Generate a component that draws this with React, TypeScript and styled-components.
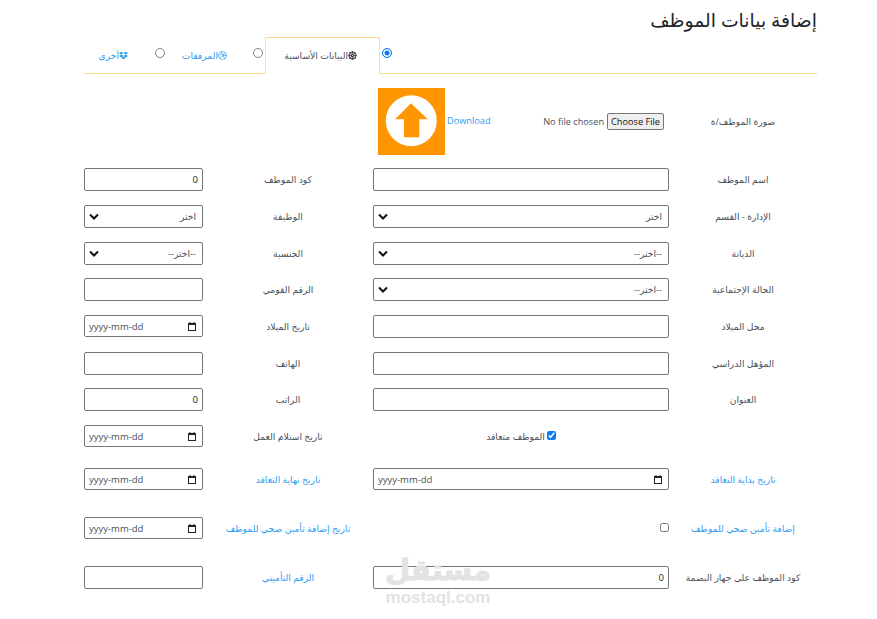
import styled, { createGlobalStyle } from 'styled-components';
import { FaDharmachakra, FaDribbble, FaDropbox } from 'react-icons/fa';

const fontStack = '"Open Sans", "DejaVu Sans", sans-serif';
const chevron =
  "data:image/svg+xml,%3Csvg xmlns='http://www.w3.org/2000/svg' width='10' height='7' viewBox='0 0 10 7'%3E%3Cpath d='M1 1.5l4 4 4-4' fill='none' stroke='%23111' stroke-width='2'/%3E%3C/svg%3E";

const GlobalStyle = createGlobalStyle`
  html, body {
    margin: 0;
    padding: 0;
    background: #fff;
  }
  body {
    font-family: ${fontStack};
    font-size: 9.2px;
    color: #212529;
  }
`;

const Page = styled.div`
  position: relative;
  width: 877px;
  height: 619px;
  overflow: hidden;
  box-sizing: border-box;
  padding: 8px 60px 0 84px;
  direction: rtl;
`;

const Title = styled.h2`
  margin: 0 0 5px;
  font-size: 18.8px;
  line-height: 24px;
  font-weight: 400;
  color: #212529;
`;

const Tabs = styled.div`
  box-sizing: border-box;
  display: flex;
  align-items: stretch;
  height: 37px;
  padding-right: 425px;
  border-bottom: 1px solid #ffd98a;
`;

const Radio = styled.input.attrs({ type: 'radio', name: 'tabs' })`
  box-sizing: border-box;
  appearance: none;
  flex: none;
  width: 10px;
  height: 10px;
  margin: 11px 0 0;
  border: 1px solid #858585;
  border-radius: 50%;
  background: #fff;

  &:checked {
    border-color: #0d7bf5;
    background: #0d7bf5;
    box-shadow: inset 0 0 0 1.5px #fff;
  }
`;

const Tab = styled.label<{ $active?: boolean; $width: number; $pad: number }>`
  box-sizing: border-box;
  flex: none;
  width: ${({ $width }) => $width}px;
  height: ${({ $active }) => ($active ? '37px' : '36px')};
  margin-right: ${({ $active }) => ($active ? '2px' : '0')};
  margin-left: ${({ $active }) => ($active ? '2px' : '0')};
  padding-right: ${({ $pad }) => $pad}px;
  padding-bottom: 1px;
  display: flex;
  align-items: center;
  font-size: 9.2px;
  color: ${({ $active }) => ($active ? '#495057' : '#2f9bf0')};
  background: #fff;
  border: 1px solid ${({ $active }) => ($active ? '#dee2e6' : 'transparent')};
  border-top-color: ${({ $active }) => ($active ? '#ffd98a' : 'transparent')};
  border-bottom: 0;
  svg {
    flex: none;
    width: 9px;
    height: 9px;
  }
`;

const Form = styled.div`
  display: flex;
  flex-direction: column;
  margin-top: 14px;
`;

const Row = styled.div<{ $top?: number; $height?: number }>`
  display: grid;
  grid-template-columns: 148px 296px 170px 119px;
  align-items: center;
  height: ${({ $height }) => $height ?? 23}px;
  margin-top: ${({ $top }) => $top ?? 0}px;
`;

const Label = styled.div<{ $link?: boolean }>`
  text-align: center;
  font-size: 9.2px;
  color: ${({ $link }) => ($link ? '#2f9bf0' : '#495057')};
`;

const Field = styled.input`
  box-sizing: border-box;
  width: 100%;
  height: 23px;
  padding: 1px 4px;
  border: 1px solid #767676;
  border-radius: 2px;
  background: transparent;
  font-family: ${fontStack};
  font-size: 9.5px;
  color: #212529;
  text-align: right;
`;

const Select = styled.select`
  box-sizing: border-box;
  appearance: none;
  width: 100%;
  height: 23px;
  padding: 0 6px 0 18px;
  border: 1px solid #767676;
  border-radius: 2px;
  background: #fff url("${chevron}") no-repeat 4px 50%;
  font-family: ${fontStack};
  font-size: 9.2px;
  color: #495057;
`;

const DateBox = styled.div`
  box-sizing: border-box;
  align-self: start;
  direction: ltr;
  display: flex;
  align-items: center;
  justify-content: space-between;
  width: 100%;
  height: 22px;
  padding: 0 6px 0 4px;
  border: 1px solid #767676;
  border-radius: 2px;
  font-size: 9.5px;
  color: #495057;
`;

const PhotoCell = styled.div`
  grid-column: 2 / span 3;
  display: flex;
  direction: ltr;
  align-items: center;
  justify-content: flex-end;
`;

const PhotoGroup = styled.div`
  display: flex;
  align-items: center;
  width: 291px;
`;

const Thumb = styled.svg`
  flex: none;
  display: block;
  width: 67px;
  height: 67px;
`;

const Download = styled.a`
  margin: -3px 0 0 2px;
  font-size: 9.2px;
  color: #2f9bf0;
  text-decoration: none;
`;

const FileField = styled.input.attrs({ type: 'file', dir: 'rtl' })`
  flex: none;
  margin: 0 5px 0 auto;
  width: 125px;
  font-family: ${fontStack};
  font-size: 9.2px;
  color: #495057;

  &::file-selector-button {
    height: 17px;
    margin: 0 0 0 3px;
    padding: 0 3px;
    border: 1px solid #767676;
    border-radius: 2px;
    background: #efefef;
    font-family: ${fontStack};
    font-size: 9.2px;
    color: #111;
  }
`;

const CheckWrap = styled.div<{ $start?: boolean }>`
  display: flex;
  align-items: center;
  justify-content: ${({ $start }) => ($start ? 'flex-start' : 'center')};
  gap: 2px;
  font-size: 9.2px;
  color: #495057;
  input {
    width: 9px;
    height: 9px;
    margin: 0 0 3px;
    accent-color: #0d7bf5;
  }
`;

const Watermark = styled.div`
  position: absolute;
  left: 384px;
  top: 550px;
  width: 108px;
  direction: ltr;
  text-align: center;
  color: #e3e3e3;
  font-family: "DejaVu Sans", sans-serif;
  font-weight: 700;
  pointer-events: none;
`;

const WatermarkWord = styled.div`
  font-size: 29px;
  line-height: 40px;
  -webkit-text-stroke: 1px #e3e3e3;
`;

const WatermarkSite = styled.div`
  font-family: "Liberation Sans", sans-serif;
  font-size: 17px;
  line-height: 15px;
`;

const UploadThumb = () => (
  <Thumb viewBox="0 0 67 67">
    <rect width="67" height="67" fill="#ff9500" />
    <circle cx="33.300" cy="32.800" r="25.500" fill="#fff" />
    <path d="M33 15.300 L49.700 31.300 H41.300 V49.300 H26 V31.300 H17 Z" fill="#ff9500" />
  </Thumb>
);

const CalendarIcon = () => (
  <svg width="8" height="9" viewBox="0 0 8 9">
    <path d="M0 1h8v8H0z M1 3v5h6V3z" fill="#222" fillRule="evenodd" />
    <path d="M1.5 0h1v1.5h-1zM5.500 0h1v1.500h-1z" fill="#222" />
  </svg>
);

const DateInput = () => (
  <DateBox>
    <span>yyyy-mm-dd</span>
    <CalendarIcon />
  </DateBox>
);

export default function App() {
  return (
    <Page>
      <GlobalStyle />
      <Title>إضافة بيانات الموظف</Title>
      <Tabs>
        <Radio defaultChecked />
        <Tab $active $width={115} $pad={22}>
          <FaDharmachakra />
          البيانات الأساسية
        </Tab>
        <Radio />
        <Tab $width={88} $pad={25}>
          <FaDribbble />
          المرفقات
        </Tab>
        <Radio />
        <Tab $width={71} $pad={26}>
          <FaDropbox />
          أخرى
        </Tab>
      </Tabs>
      <Form>
        <Row $height={67}>
          <Label>صورة الموظف/ة</Label>
          <PhotoCell>
            <PhotoGroup>
              <UploadThumb />
              <Download href="#">Download</Download>
              <FileField />
            </PhotoGroup>
          </PhotoCell>
        </Row>
        <Row $top={13}>
          <Label>اسم الموظف</Label>
          <Field />
          <Label>كود الموظف</Label>
          <Field defaultValue="0" />
        </Row>
        <Row $top={14}>
          <Label>الإدارة - القسم</Label>
          <Select><option>اختر</option></Select>
          <Label>الوظيفة</Label>
          <Select><option>اختر</option></Select>
        </Row>
        <Row $top={14}>
          <Label>الديانة</Label>
          <Select><option>--اختر--</option></Select>
          <Label>الجنسية</Label>
          <Select><option>--اختر--</option></Select>
        </Row>
        <Row $top={13}>
          <Label>الحالة الإجتماعية</Label>
          <Select><option>--اختر--</option></Select>
          <Label>الرقم القومي</Label>
          <Field />
        </Row>
        <Row $top={14}>
          <Label>محل الميلاد</Label>
          <Field />
          <Label>تاريخ الميلاد</Label>
          <DateInput />
        </Row>
        <Row $top={14}>
          <Label>المؤهل الدراسي</Label>
          <Field />
          <Label>الهاتف</Label>
          <Field />
        </Row>
        <Row $top={13}>
          <Label>العنوان</Label>
          <Field />
          <Label>الراتب</Label>
          <Field defaultValue="0" />
        </Row>
        <Row $top={14}>
          <span />
          <CheckWrap>
            <input type="checkbox" defaultChecked />
            الموظف متعاقد
          </CheckWrap>
          <Label>تاريخ استلام العمل</Label>
          <DateInput />
        </Row>
        <Row $top={20}>
          <Label $link>تاريخ بداية التعاقد</Label>
          <DateInput />
          <Label $link>تاريخ نهاية التعاقد</Label>
          <DateInput />
        </Row>
        <Row $top={26}>
          <Label $link>إضافة تأمين صحي للموظف</Label>
          <CheckWrap $start>
            <input type="checkbox" />
          </CheckWrap>
          <Label $link>تاريخ إضافة تأمين صحي للموظف</Label>
          <DateInput />
        </Row>
        <Row $top={26}>
          <Label>كود الموظف على جهاز البصمة</Label>
          <Field defaultValue="0" />
          <Label $link>الرقم التأميني</Label>
          <Field />
        </Row>
      </Form>
      <Watermark>
        <WatermarkWord>مستقل</WatermarkWord>
        <WatermarkSite>mostaql.com</WatermarkSite>
      </Watermark>
    </Page>
  );
}
